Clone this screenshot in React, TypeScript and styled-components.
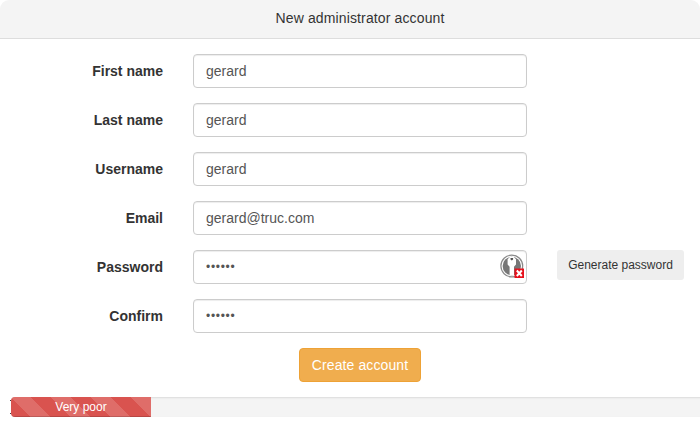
import React from "react";
import styled, { createGlobalStyle } from "styled-components";

const GlobalStyle = createGlobalStyle`
  *, *::before, *::after { box-sizing: border-box; }
  body {
    margin: 0;
    background: #fff;
    color: #333;
    font: 14px/20px "Liberation Sans", Arial, sans-serif;
  }
`;

const Panel = styled.div`
  width: 700px;
  height: 432px;
  overflow: hidden;
`;

const Header = styled.header`
  height: 39px;
  padding-top: 8px;
  padding-left: 20px;
  text-align: center;
  letter-spacing: 0.13px;
  background: #f4f4f4;
  border-bottom: 1px solid #ddd;
  border-radius: 9px 9px 0 0;
`;

const Form = styled.form`
  display: flex;
  flex-direction: column;
  gap: 15px;
  height: 358px;
  padding-top: 15px;
`;

const Row = styled.div`
  display: grid;
  grid-template-columns: 163px 334px 127px;
  column-gap: 30px;
  height: 34px;
`;

const Label = styled.label`
  padding-top: 7px;
  font-weight: 700;
  text-align: right;
`;

const Field = styled.div`
  position: relative;
  height: 34px;
`;

const Input = styled.input`
  display: block;
  width: 100%;
  height: 34px;
  padding: 6px 12px;
  font: inherit;
  color: #555;
  background: #fff;
  border: 1px solid #ccc;
  border-radius: 4px;
  outline: none;
  box-shadow: inset 0 1px 1px rgba(0, 0, 0, 0.075);

  &[type="password"] {
    padding-bottom: 7px;
    font-size: 12px;
    letter-spacing: 0.7px;
  }
`;

const KeyBadge = styled.svg`
  position: absolute;
  top: 4px;
  right: 2px;
`;

const GenerateButton = styled.button`
  width: 127px;
  height: 30px;
  padding: 0;
  border: 0;
  border-radius: 3px;
  background: #eee;
  color: #333;
  font: 12px/18px "Liberation Sans", Arial, sans-serif;
`;

const CreateButton = styled.button`
  width: 122px;
  height: 34px;
  margin-left: 299px;
  padding: 0;
  border: 1px solid #eea236;
  border-radius: 4px;
  background: #f0ad4e;
  color: #fff;
  font: inherit;
  letter-spacing: 0.1px;
`;

const Strength = styled.div`
  display: flex;
  height: 20px;
  margin-right: -6px;
`;

const Edge = styled.span`
  display: flex;
  flex-direction: column;
  justify-content: space-between;
  width: 1px;
  margin-left: 10px;
  padding: 3px 0;

  &::before,
  &::after {
    content: "";
    height: 1px;
    background: #444;
  }
`;

const Track = styled.div`
  flex: 1;
  background: #f4f4f4;
  border-radius: 4px 0 0 4px;
  box-shadow: inset 0 1px 2px rgba(0, 0, 0, 0.1);
  overflow: hidden;
`;

const Bar = styled.div`
  width: 140px;
  height: 20px;
  color: #fff;
  font-size: 12px;
  text-align: center;
  background: #d9534f
    linear-gradient(
      45deg,
      rgba(255, 255, 255, 0.15) 25%,
      transparent 25%,
      transparent 50%,
      rgba(255, 255, 255, 0.15) 50%,
      rgba(255, 255, 255, 0.15) 75%,
      transparent 75%
    );
  background-size: 40px 40px;
  box-shadow: inset 0 -1px 0 rgba(0, 0, 0, 0.15);
`;

const fields = [
  { id: "first", label: "First name", value: "gerard" },
  { id: "last", label: "Last name", value: "gerard" },
  { id: "user", label: "Username", value: "gerard" },
  { id: "email", label: "Email", value: "gerard@truc.com" },
  { id: "password", label: "Password", value: "secret", secret: true, generate: true },
  { id: "confirm", label: "Confirm", value: "secret", secret: true },
];

const KeyIcon = () => (
  <KeyBadge width="26" height="26" viewBox="0 0 26 26">
    <circle cx="12.8" cy="12" r="10.9" fill="#fff" stroke="#8a8a8a" strokeWidth="1.2" />
    <circle cx="12.8" cy="12" r="9.2" fill="#777" />
    <path d="M8.6 5.2 10.8 3h4l2.2 2.2v5.3l-2 2.2V21h-4.4v-8.3l-2-2.2z" fill="#fff" />
    <path d="M11.5 4h2.6v1.4l-1.3 1.1-1.3-1.1z" fill="#555" />
    <rect x="15.5" y="14.5" width="9.5" height="9.5" fill="#e6111c" />
    <path d="m17.8 16.5 5 5.5m0-5.5-5 5.5" stroke="#fff" strokeWidth="2" />
  </KeyBadge>
);

export default function App() {
  return (
    <Panel>
      <GlobalStyle />
      <Header>New administrator account</Header>
      <Form>
        {fields.map((f) => (
          <Row key={f.id}>
            <Label htmlFor={f.id}>{f.label}</Label>
            <Field>
              <Input id={f.id} type={f.secret ? "password" : "text"} defaultValue={f.value} />
              {f.generate && <KeyIcon />}
            </Field>
            {f.generate && <GenerateButton type="button">Generate password</GenerateButton>}
          </Row>
        ))}
        <CreateButton type="button">Create account</CreateButton>
      </Form>
      <Strength>
        <Edge />
        <Track>
          <Bar>Very poor</Bar>
        </Track>
      </Strength>
    </Panel>
  );
}
